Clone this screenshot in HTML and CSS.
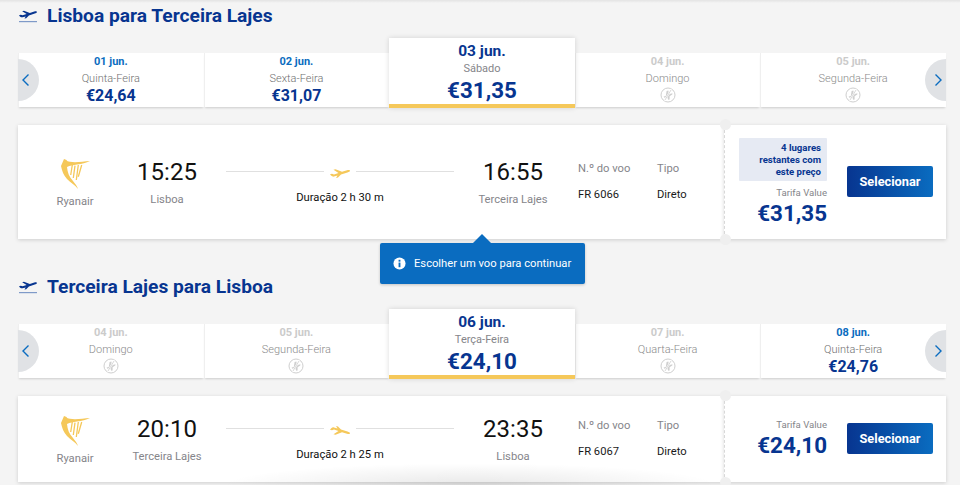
FILE: index.html
```html
<!DOCTYPE html>
<html lang="pt">
<head>
<meta charset="utf-8">
<title>Voos</title>
<link rel="stylesheet" href="styles.css">
</head>
<body>
<svg class="defs" width="0" height="0" aria-hidden="true">
  <symbol id="plane" viewBox="0 0 20 9">
    <path d="M0 5.3 L2 4.8 L4 5.4 L8.5 4 L3.5 .8 L5.5 .3 L12 2.8 L17 1.2 C19 .6 20 1 20 1.7 C20 2.4 19 2.9 17.5 3.4 L11 5.6 L8 8.6 L6 9 L7.5 6.6 L4 7.6 C3 7.8 2 7.4 1 6.6 Z"/>
  </symbol>
  <symbol id="noflight" viewBox="0 0 16 16">
    <circle cx="8" cy="8" r="7" fill="none" stroke="#cfcfcf" stroke-width="1"/>
    <path d="M3.6 9.4 L5.8 8.9 L6.6 4 L8.4 3.6 L8.8 7.6 L11.2 6.6 C12.4 6.2 13 6.6 12.2 7.5 L9.6 9.2 L9.6 12.6 L8.2 12.8 L7.4 10.2 L4.4 10.8 Z" fill="#cfcfcf"/>
    <path d="M11.5 2.5 L4.5 13.5" stroke="#fff" stroke-width="1.6"/>
    <path d="M11 3 L5 13" stroke="#cfcfcf" stroke-width=".8"/>
  </symbol>
  <symbol id="harp" viewBox="0 0 32 32">
    <path fill="#f5c85a" d="M5 1 L7.5 2 C8 3 9 3.5 11 3.8 C17 4.8 24 3.5 31 3 C27 5 23 6 18 6.5 C14 7 11 7.5 8 9 C8.5 14 10 19 14 23 C16 25.5 18 28 19 31 C16 27 12 25 8 21 C4.5 17 3 13 2 8 Z"/>
    <path fill="none" stroke="#f5c85a" stroke-width="1.3" d="M13.3 7 L11.7 17 M16 7.7 L14.3 20 M19.3 7 L17.3 22 M22.7 7 L19.3 18.7"/>
  </symbol>
</svg>

<main class="page">
  <section class="leg">
    <h2 class="leg-title">
      <svg class="leg-icon" viewBox="0 0 18 13"><use href="#plane" width="18" height="9"/><rect y="11" width="18" height="1.2" class="leg-line"/></svg>
      Lisboa para Terceira Lajes
    </h2>
    <div class="strip">
      <button class="nav nav-left" aria-label="Anterior"><svg viewBox="0 0 7 12"><path d="M6.5 .5 L1 6 L6.5 11.5"/></svg></button>
      <div class="tab"><div class="date">01 jun.</div><div class="day">Quinta-Feira</div><div class="price">€24,64</div></div>
      <div class="tab"><div class="date">02 jun.</div><div class="day">Sexta-Feira</div><div class="price">€31,07</div></div>
      <div class="tab active"><div class="date">03 jun.</div><div class="day">Sábado</div><div class="price">€31,35</div></div>
      <div class="tab off"><div class="date">04 jun.</div><div class="day">Domingo</div><svg class="none"><use href="#noflight"/></svg></div>
      <div class="tab off"><div class="date">05 jun.</div><div class="day">Segunda-Feira</div><svg class="none"><use href="#noflight"/></svg></div>
      <button class="nav nav-right" aria-label="Seguinte"><svg viewBox="0 0 7 12"><path d="M.5 .5 L6 6 L.5 11.5"/></svg></button>
    </div>
    <article class="card">
      <div class="flight">
        <div class="carrier"><svg class="harp"><use href="#harp"/></svg><div class="label">Ryanair</div></div>
        <div class="point"><div class="time">15:25</div><div class="label">Lisboa</div></div>
        <div class="route">
          <div class="route-line"><span class="rule"></span><svg class="route-plane"><use href="#plane"/></svg><span class="rule"></span></div>
          <div class="duration">Duração 2 h 30 m</div>
        </div>
        <div class="point"><div class="time">16:55</div><div class="label">Terceira Lajes</div></div>
        <div class="meta"><div class="label">N.º do voo</div><div class="value">FR 6066</div></div>
        <div class="meta"><div class="label">Tipo</div><div class="value">Direto</div></div>
      </div>
      <div class="fare">
        <div class="fare-info">
          <div class="seats">4 lugares restantes com este preço</div>
          <div class="fare-name">Tarifa Value</div>
          <div class="fare-price">€31,35</div>
        </div>
        <button class="select">Selecionar</button>
      </div>
    </article>
    <div class="tooltip">
      <svg class="info" viewBox="0 0 14 14"><circle cx="7" cy="7" r="6.5" fill="#fff"/><rect x="6" y="6" width="2" height="5" fill="#0a6cc0"/><rect x="6" y="3" width="2" height="2" fill="#0a6cc0"/></svg>
      Escolher um voo para continuar
    </div>
  </section>

  <section class="leg leg-return">
    <h2 class="leg-title">
      <svg class="leg-icon" viewBox="0 0 18 13"><use href="#plane" width="18" height="9"/><rect y="11" width="18" height="1.2" class="leg-line"/></svg>
      Terceira Lajes para Lisboa
    </h2>
    <div class="strip">
      <button class="nav nav-left" aria-label="Anterior"><svg viewBox="0 0 7 12"><path d="M6.5 .5 L1 6 L6.5 11.5"/></svg></button>
      <div class="tab off"><div class="date">04 jun.</div><div class="day">Domingo</div><svg class="none"><use href="#noflight"/></svg></div>
      <div class="tab off"><div class="date">05 jun.</div><div class="day">Segunda-Feira</div><svg class="none"><use href="#noflight"/></svg></div>
      <div class="tab active"><div class="date">06 jun.</div><div class="day">Terça-Feira</div><div class="price">€24,10</div></div>
      <div class="tab off"><div class="date">07 jun.</div><div class="day">Quarta-Feira</div><svg class="none"><use href="#noflight"/></svg></div>
      <div class="tab"><div class="date">08 jun.</div><div class="day">Quinta-Feira</div><div class="price">€24,76</div></div>
      <button class="nav nav-right" aria-label="Seguinte"><svg viewBox="0 0 7 12"><path d="M.5 .5 L6 6 L.5 11.5"/></svg></button>
    </div>
    <article class="card card-short">
      <div class="flight">
        <div class="carrier"><svg class="harp"><use href="#harp"/></svg><div class="label">Ryanair</div></div>
        <div class="point"><div class="time">20:10</div><div class="label">Terceira Lajes</div></div>
        <div class="route">
          <div class="route-line"><span class="rule"></span><svg class="route-plane flip"><use href="#plane"/></svg><span class="rule"></span></div>
          <div class="duration">Duração 2 h 25 m</div>
        </div>
        <div class="point"><div class="time">23:35</div><div class="label">Lisboa</div></div>
        <div class="meta"><div class="label">N.º do voo</div><div class="value">FR 6067</div></div>
        <div class="meta"><div class="label">Tipo</div><div class="value">Direto</div></div>
      </div>
      <div class="fare">
        <div class="fare-info">
          <div class="fare-name">Tarifa Value</div>
          <div class="fare-price">€24,10</div>
        </div>
        <button class="select">Selecionar</button>
      </div>
    </article>
  </section>
</main>
<div class="top-shade"></div>
<div class="bottom-shade"></div>
</body>
</html>
```

FILE: styles.css
```css
* { box-sizing: border-box; }
html, body { height: 485px; overflow: hidden; }
body {
  margin: 0;
  background: #f4f4f4;
  font-family: Roboto, "Liberation Sans", sans-serif;
  color: #1a1a1a;
  position: relative;
}
.defs { position: absolute; }
.page { padding: 0 14px 0 18px; }
.leg { position: relative; }
.leg-return { margin-top: 32px; }
.leg-title {
  margin: 0;
  height: 38px;
  padding-top: 4px;
  display: flex;
  align-items: flex-start;
  gap: 10px;
  font-size: 19.2px;
  line-height: 23px;
  font-weight: 700;
  color: #073590;
}
.leg-icon { width: 18px; height: 13px; margin: 6px 0 0 1px; fill: #073590; flex: none; }
.leg-line { fill: #7f9ac8; }

.strip { position: relative; display: flex; align-items: flex-end; height: 70px; }
.tab {
  flex: 1 1 0;
  height: 54px;
  margin-bottom: 1px;
  background: #fff;
  text-align: center;
  box-shadow: inset 1px 0 0 #efefef, 0 2px 2px -1px rgba(0,0,0,.16);
}
.tab.active {
  height: 70px;
  margin-bottom: 0;
  padding-top: 4px;
  border-bottom: 4px solid #f5c85a;
  position: relative;
  z-index: 1;
  box-shadow: 0 0 5px rgba(0,0,0,.14);
}
.date { font-size: 11px; line-height: 18px; font-weight: 700; color: #0a6cc0; }
.day { font-size: 11px; line-height: 16px; font-weight: 300; color: #6f6f6f; }
.price { font-size: 16px; line-height: 18px; font-weight: 700; color: #073590; }
.active .date { font-size: 15.5px; line-height: 19px; color: #073590; }
.active .day { line-height: 15px; font-weight: 400; color: #85858a; }
.active .price { font-size: 22.4px; line-height: 28px; }
.off .date { color: #cbcbcb; }
.off .day { color: #8a8a8a; }
.none { display: block; width: 16px; height: 16px; margin: 0 auto; }

.nav {
  position: absolute;
  z-index: 2;
  top: 21px;
  width: 21px;
  height: 42px;
  padding: 0;
  border: 0;
  background: #e0e2e5;
  display: flex;
  align-items: center;
}
.nav svg { width: 7px; height: 12px; fill: none; stroke: #0a6cc0; stroke-width: 1.4; }
.nav-left { left: 0; border-radius: 0 21px 21px 0; padding-left: 4px; }
.nav-right { right: 0; border-radius: 21px 0 0 21px; padding-left: 10px; }

.card {
  margin-top: 17px;
  height: 114px;
  display: flex;
  align-items: stretch;
  position: relative;
}
.card-short { height: 86px; }
.flight {
  width: 706px;
  background: #fff;
  box-shadow: 0 1px 4px rgba(0,0,0,.16);
  display: grid;
  grid-template-columns: 114px 70px 252px 118px 85px 67px;
  align-items: center;
  position: relative;
}
.carrier { text-align: center; margin-top: 4px; }
.harp { display: block; width: 32px; height: 32px; margin: 0 auto 4px; }
.label { font-size: 11.2px; line-height: 16px; color: #85858a; }
.point { text-align: center; margin-top: 1px; }
.point .label { white-space: nowrap; margin: 0 -20px; }
.time { font-size: 24px; line-height: 28px; color: #111; margin-bottom: 6px; }
.route { padding: 0 0 0 24px; margin-top: 5px; }
.route-line { display: flex; align-items: center; gap: 6px; height: 16px; }
.rule { flex: 1; height: 1px; background: #e0e0e0; }
.route-plane { width: 20px; height: 9px; fill: #f5c85a; margin-top: 4px; }
.flip { transform: scaleY(-1); }
.duration { font-size: 11.2px; line-height: 16px; text-align: center; color: #111; margin-top: 10px; }
.meta { padding-left: 6px; margin-top: -1px; }
.meta + .meta { padding-left: 0; }
.meta .label { margin-bottom: 10px; }
.value { font-size: 11.2px; line-height: 16px; color: #1a1a1a; }

.fare {
  flex: 1;
  background: #fff;
  box-shadow: 0 1px 4px rgba(0,0,0,.16);
  border-left: 1px dashed #d8d8d8;
  display: flex;
  align-items: center;
  padding: 0 13px 0 14px;
  position: relative;
}
.fare::before, .fare::after {
  content: "";
  position: absolute;
  left: -5px;
  width: 11px;
  height: 11px;
  border-radius: 50%;
  background: #efefef;
}
.fare::before { top: -6px; }
.fare::after { bottom: -6px; }
.fare-info { width: 88px; text-align: right; }
.seats {
  background: #e6eaf3;
  color: #073590;
  font-size: 9.6px;
  font-weight: 700;
  line-height: 12px;
  padding: 4px 6px 0 6px;
  height: 43px;
  border-radius: 1px;
  margin-bottom: 6px;
}
.fare-name { font-size: 9.6px; line-height: 12px; color: #85858a; }
.fare-price { font-size: 22.4px; line-height: 28px; font-weight: 700; color: #073590; }
.select {
  margin: -1px 0 0 20px;
  width: 86px;
  height: 31px;
  border: 0;
  border-radius: 2px;
  background: linear-gradient(90deg, #073590, #0a6cc0);
  color: #fff;
  font: 700 12.8px Roboto, "Liberation Sans", sans-serif;
  padding: 0;
}

.tooltip {
  position: absolute;
  z-index: 3;
  left: 362px;
  top: 243px;
  width: 205px;
  height: 41px;
  background: #0a6cc0;
  color: #fff;
  border-radius: 2px;
  font-size: 11.2px;
  display: flex;
  align-items: center;
  gap: 8px;
  padding-left: 13px;
  box-shadow: 0 1px 3px rgba(0,0,0,.2);
}
.tooltip::before {
  content: "";
  position: absolute;
  left: 93px;
  top: -9px;
  border-left: 9px solid transparent;
  border-right: 9px solid transparent;
  border-bottom: 9px solid #0a6cc0;
}
.info { width: 13px; height: 13px; flex: none; }

.top-shade {
  position: absolute;
  left: 0; right: 0; top: 0;
  height: 3px;
  background: linear-gradient(rgba(0,0,0,.07), transparent);
}
.bottom-shade {
  position: absolute;
  z-index: 4;
  left: 220px;
  bottom: -22px;
  width: 500px;
  height: 44px;
  background: radial-gradient(ellipse at center, rgba(0,0,0,.09), transparent 70%);
}
```
